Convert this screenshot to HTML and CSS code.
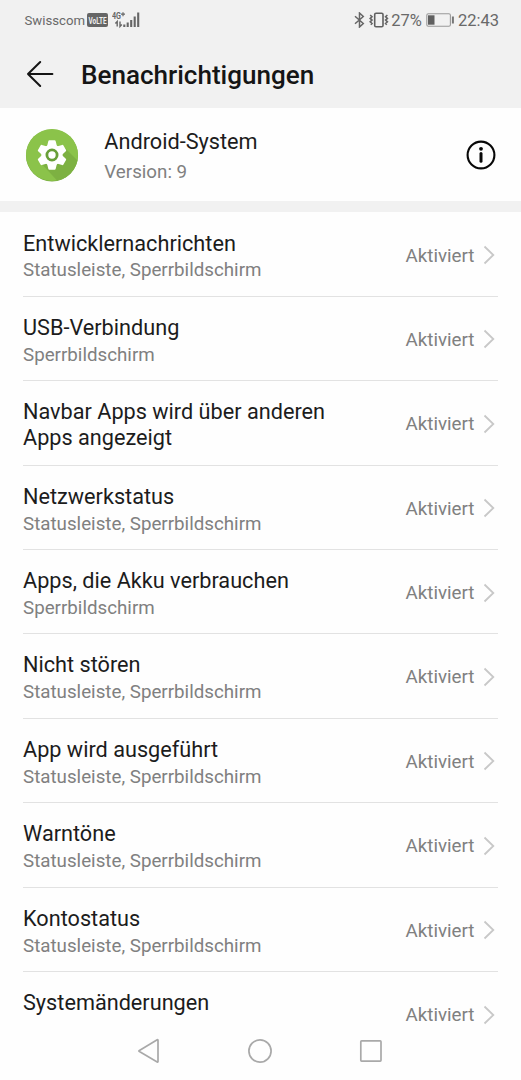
FILE: index.html
```html
<!DOCTYPE html>
<html lang="de">
<head>
<meta charset="utf-8">
<title>Benachrichtigungen</title>
<link rel="stylesheet" href="styles.css">
</head>
<body>
<div class="screen">
  <header class="top">
    <div class="status">
      <span class="carrier">Swisscom</span>
      <svg class="volte" width="21" height="14" viewBox="0 0 21 14"><rect width="21" height="14" rx="2" fill="#666"/><text x="1.500" y="10.500" textLength="18" lengthAdjust="spacingAndGlyphs" class="volte-text">VoLTE</text></svg>
      <svg class="signal" width="28" height="18" viewBox="0 0 28 18"><text x="0" y="8" class="net-text" textLength="9" lengthAdjust="spacingAndGlyphs">4G</text><path d="M9 3.200h4M11 1.200v4" stroke="#666" stroke-width="1.200"/><path d="M5.200 15.500v-5l-1.800 2M8 10.500v5l1.800-2" fill="none" stroke="#666" stroke-width="1.400"/><path d="M12.300 13.500v2.500M15.700 11.500v4.500M19.200 9v7M22.700 5.500v10.500M26.200 1.500v14.500" stroke="#666" stroke-width="2.100"/></svg>
      <span class="spacer"></span>
      <svg class="bt" width="11" height="16" viewBox="0 0 11 16"><path d="M1 4.200l8.300 7.300-3.800 3.500v-14l3.800 3.500-8.300 7.300" fill="none" stroke="#666" stroke-width="1.500"/></svg>
      <svg class="vib" width="20" height="16" viewBox="0 0 20 16"><rect x="5.700" y="1.200" width="8.300" height="13.600" rx="1.300" fill="none" stroke="#606060" stroke-width="1.600"/><path d="M1.200 3l1.800 1.700-1.800 1.700 1.800 1.700-1.800 1.700 1.800 1.700-1.200 1.200M18.400 3l-1.800 1.700 1.800 1.700-1.800 1.700 1.800 1.700-1.800 1.700 1.200 1.200" fill="none" stroke="#666" stroke-width="1.600"/></svg>
      <span class="pct">27%</span>
      <svg class="bat" width="29" height="14" viewBox="0 0 29 14"><rect x=".8" y=".8" width="23.600" height="12.400" rx="1.500" fill="none" stroke="#999" stroke-width="1.100"/><rect x="2" y="2.300" width="6.500" height="9.400" fill="#606060"/><path d="M26.900 3.500v7" stroke="#777" stroke-width="2"/></svg>
      <span class="clock">22:43</span>
    </div>
    <div class="bar">
      <svg class="back" width="28" height="28" viewBox="0 0 28 28"><path d="M26.400 14H2M14.200 2L2 14l12.200 12" fill="none" stroke="#151515" stroke-width="2" stroke-linecap="round" stroke-linejoin="round"/></svg>
      <h1>Benachrichtigungen</h1>
    </div>
  </header>
  <section class="app">
    <svg class="app-icon" width="54" height="54" viewBox="-27 -27 54 54">
      <defs><clipPath id="disc"><circle r="26"/></clipPath></defs>
      <circle r="26" cy=".4" fill="#71a53b"/>
      <circle r="26" fill="#8bc34a"/>
      <path clip-path="url(#disc)" d="M-13 6L13-7l20 20v20H12z" fill="#7db142"/>
      <g fill="#fff"><circle r="10.600"/><path id="tooth" d="M-5-8.500l1.300-5.300q.2-.9 1.100-.9h5.200q.9 0 1.100.9l1.300 5.300z"/><use href="#tooth" transform="rotate(60)"/><use href="#tooth" transform="rotate(120)"/><use href="#tooth" transform="rotate(180)"/><use href="#tooth" transform="rotate(240)"/><use href="#tooth" transform="rotate(300)"/></g>
      <circle r="5.100" fill="#fff" stroke="#689f38" stroke-width="2.800"/>
    </svg>
    <div class="app-text">
      <div class="app-name">Android-System</div>
      <div class="app-version">Version: 9</div>
    </div>
    <svg class="info" width="30" height="30" viewBox="0 0 30 30"><circle cx="15" cy="15" r="13.400" fill="none" stroke="#080808" stroke-width="2.100"/><circle cx="15" cy="8.800" r="1.900" fill="#080808"/><path d="M15 13.400v7.900" stroke="#080808" stroke-width="3" stroke-linecap="round"/></svg>
  </section>
  <main class="list">
    <div class="row"><div class="label"><div class="title">Entwicklernachrichten</div><div class="sub">Statusleiste, Sperrbildschirm</div></div><span class="state">Aktiviert</span><svg class="chev" viewBox="0 0 12 20"><path d="M1.500 1.500L10.300 10l-8.800 8.500"/></svg></div>
    <div class="row"><div class="label"><div class="title">USB-Verbindung</div><div class="sub">Sperrbildschirm</div></div><span class="state">Aktiviert</span><svg class="chev" viewBox="0 0 12 20"><path d="M1.500 1.500L10.300 10l-8.800 8.500"/></svg></div>
    <div class="row"><div class="label"><div class="title">Navbar Apps wird über anderen<br>Apps angezeigt</div></div><span class="state">Aktiviert</span><svg class="chev" viewBox="0 0 12 20"><path d="M1.500 1.500L10.300 10l-8.800 8.500"/></svg></div>
    <div class="row"><div class="label"><div class="title">Netzwerkstatus</div><div class="sub">Statusleiste, Sperrbildschirm</div></div><span class="state">Aktiviert</span><svg class="chev" viewBox="0 0 12 20"><path d="M1.500 1.500L10.300 10l-8.800 8.500"/></svg></div>
    <div class="row"><div class="label"><div class="title">Apps, die Akku verbrauchen</div><div class="sub">Sperrbildschirm</div></div><span class="state">Aktiviert</span><svg class="chev" viewBox="0 0 12 20"><path d="M1.500 1.500L10.300 10l-8.800 8.500"/></svg></div>
    <div class="row"><div class="label"><div class="title">Nicht stören</div><div class="sub">Statusleiste, Sperrbildschirm</div></div><span class="state">Aktiviert</span><svg class="chev" viewBox="0 0 12 20"><path d="M1.500 1.500L10.300 10l-8.800 8.500"/></svg></div>
    <div class="row"><div class="label"><div class="title">App wird ausgeführt</div><div class="sub">Statusleiste, Sperrbildschirm</div></div><span class="state">Aktiviert</span><svg class="chev" viewBox="0 0 12 20"><path d="M1.500 1.500L10.300 10l-8.800 8.500"/></svg></div>
    <div class="row"><div class="label"><div class="title">Warntöne</div><div class="sub">Statusleiste, Sperrbildschirm</div></div><span class="state">Aktiviert</span><svg class="chev" viewBox="0 0 12 20"><path d="M1.500 1.500L10.300 10l-8.800 8.500"/></svg></div>
    <div class="row"><div class="label"><div class="title">Kontostatus</div><div class="sub">Statusleiste, Sperrbildschirm</div></div><span class="state">Aktiviert</span><svg class="chev" viewBox="0 0 12 20"><path d="M1.500 1.500L10.300 10l-8.800 8.500"/></svg></div>
    <div class="row last"><div class="label"><div class="title">Systemänderungen</div></div><span class="state">Aktiviert</span><svg class="chev" viewBox="0 0 12 20"><path d="M1.500 1.500L10.300 10l-8.800 8.500"/></svg></div>
  </main>
  <nav class="nav">
    <svg width="24" height="26" viewBox="0 0 24 26"><path d="M21 2.200v21.300q0 .8-.8.400L2.400 13.600q-1-.6 0-1.200L20.200 1.800q.8-.4.800.4z"/></svg>
    <svg width="26" height="26" viewBox="0 0 26 26"><circle cx="13" cy="13" r="11.100"/></svg>
    <svg width="24" height="26" viewBox="0 0 24 26"><rect x="1.800" y="2.900" width="20.200" height="20.200" rx=".8"/></svg>
  </nav>
</div>
</body>
</html>
```
FILE: styles.css
```css
body {
  margin: 0;
  background: #fff;
  font-family: Roboto, "Liberation Sans", sans-serif;
}
.screen {
  width: 521px;
  height: 1080px;
  display: flex;
  flex-direction: column;
  overflow: hidden;
  background: #fefefe;
}
svg { display: block; flex: none; }
.top { flex: none; height: 108px; background: #f1f1f1; }
.status {
  display: flex;
  align-items: center;
  box-sizing: border-box;
  height: 40px;
  padding: 0 22px 0 24.5px;
  color: #696969;
  font-size: 16.5px;
}
.carrier { font-size: 13.2px; width: 62.5px; white-space: nowrap; }
.volte-text { font: 700 8.5px Roboto, sans-serif; fill: #f0f0f0; }
.net-text { font: 700 8.5px Roboto, sans-serif; fill: #666; }
.signal { margin-left: 4px; }
.spacer { flex: 1; }
.vib { margin-left: 4px; }
.pct { margin-left: 2.5px; }
.bat { margin-left: 4px; }
.clock { margin-left: 3px; }
.bar {
  display: flex;
  align-items: center;
  height: 68px;
  padding-left: 26px;
}
.back { margin-bottom: 1px; }
h1 {
  margin: 2px 0 0 27px;
  font-size: 26.05px;
  font-weight: 500;
  line-height: 32px;
  color: #151515;
}
.app {
  flex: none;
  box-sizing: border-box;
  display: flex;
  align-items: center;
  height: 104px;
  padding: 0 25.5px 0 25px;
  border-bottom: 11px solid #f1f1f1;
}
.app-text { flex: 1; margin: 3px 0 0 25.300px; }
.app-name { font-size: 21.700px; line-height: 28px; color: #1c1c1c; }
.app-version { margin-top: 4px; font-size: 18.750px; line-height: 24px; color: #808080; }
.list { flex: none; box-sizing: border-box; height: 816px; overflow: hidden; padding: .5px 23px 0; }
.row {
  box-sizing: border-box;
  display: flex;
  align-items: flex-start;
  height: 84.400px;
  padding-top: 18px;
  border-bottom: 1px solid #e2e2e2;
}
.row.last { border-bottom: 0; }
.label { flex: 1; }
.title { font-size: 21.680px; line-height: 25.600px; color: #1c1c1c; }
.sub { margin-top: 3.400px; font-size: 18.750px; line-height: 22px; color: #808080; }
.state { margin: 14px 8.500px 0 0; font-size: 18.750px; line-height: 22px; color: #808080; }
.chev { width: 12px; height: 20px; margin: 14.500px 3px 0 0; fill: none; stroke: #c8c8c8; stroke-width: 1.800; }
.nav {
  flex: none;
  display: flex;
  justify-content: center;
  align-items: center;
  gap: 86px;
  height: 45px;
  padding-right: 1px;
}
.nav svg { fill: none; stroke: #a9a9a9; stroke-width: 1.700; }
```
